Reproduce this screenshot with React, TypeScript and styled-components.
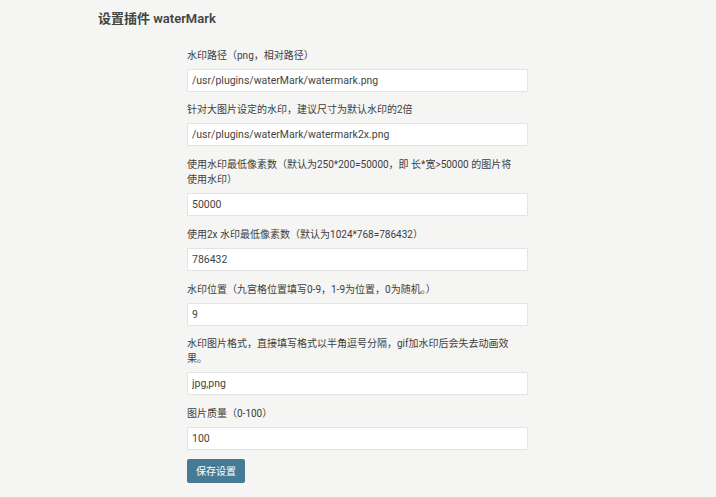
import styled, { createGlobalStyle } from "styled-components"

const GlobalStyle = createGlobalStyle`
    html, body {
        margin: 0;
        padding: 0;
        background: #f5f5f3;
    }
    body {
        font-family: Roboto, "Noto Sans CJK SC", sans-serif;
        color: #444;
    }
`

interface IField {
    label: string;
    value: string;
}

const fields: IField[] = [
    { label: "水印路径（png，相对路径）", value: "/usr/plugins/waterMark/watermark.png" },
    { label: "针对大图片设定的水印，建议尺寸为默认水印的2倍", value: "/usr/plugins/waterMark/watermark2x.png" },
    { label: "使用水印最低像素数（默认为250*200=50000，即 长*宽>50000 的图片将使用水印）", value: "50000" },
    { label: "使用2x 水印最低像素数（默认为1024*768=786432）", value: "786432" },
    { label: "水印位置（九宫格位置填写0-9，1-9为位置，0为随机。）", value: "9" },
    { label: "水印图片格式，直接填写格式以半角逗号分隔，gif加水印后会失去动画效果。", value: "jpg,png" },
    { label: "图片质量（0-100）", value: "100" },
]

export default function App() {
    return (
        <Page>
            <GlobalStyle />
            <Title>设置插件 waterMark</Title>
            <Form onSubmit={e => e.preventDefault()}>
                {fields.map(f => (
                    <Field key={f.label}>
                        <Label>{f.label}</Label>
                        <Input type="text" defaultValue={f.value} />
                    </Field>
                ))}
                <SubmitButton type="submit">保存设置</SubmitButton>
            </Form>
        </Page>
    )
}

const Page = styled.div`
    padding: 10px 0 14px 98px;
    min-height: 497px;
    box-sizing: border-box;
`

const Title = styled.h2`
    margin: 0;
    font-size: 13px;
    line-height: 18px;
    font-weight: 600;
    color: #444;
`

const Form = styled.form`
    margin: 19.5px 0 0 89px;
    width: 341px;
    display: flex;
    flex-direction: column;
`

const Field = styled.div`
    display: flex;
    flex-direction: column;
    margin-bottom: 10.75px;
`

const Label = styled.label`
    display: block;
    max-width: 331px;
    font-size: 10px;
    line-height: 15px;
    color: #3d3d3d;
    margin-bottom: 6px;
`

const Input = styled.input`
    box-sizing: border-box;
    height: 23px;
    width: 100%;
    padding: 0 4px;
    border: 1px solid #e4e4e1;
    border-radius: 1px;
    background: #fff;
    font-family: Roboto, "Noto Sans CJK SC", sans-serif;
    font-size: 10.5px;
    color: #444;
    outline: none;
`

const SubmitButton = styled.button`
    align-self: flex-start;
    height: 24px;
    padding: 0 9px;
    margin-top: -2px;
    border: none;
    border-radius: 2px;
    background: #467b96;
    color: #fff;
    font-family: Roboto, "Noto Sans CJK SC", sans-serif;
    font-size: 10px;
    cursor: pointer;
`
